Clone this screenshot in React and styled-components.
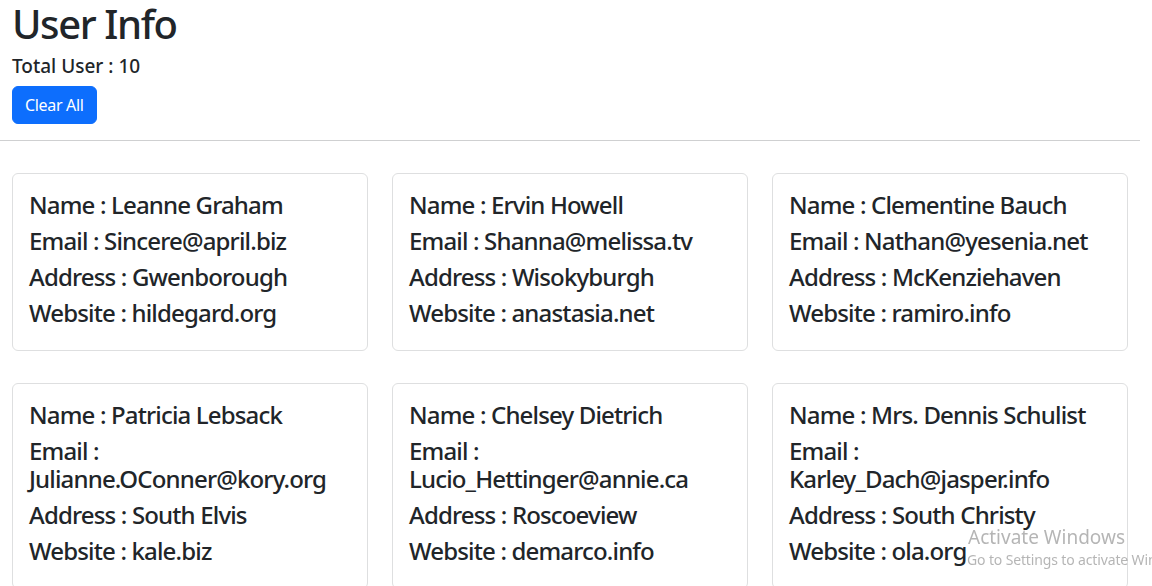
import React from "react";
import styled, { createGlobalStyle } from "styled-components";

const GlobalStyle = createGlobalStyle`
  body {
    margin: 0;
    font-family: "Noto Sans", "Open Sans", sans-serif;
    color: #212529;
    background: #fff;
    overflow: hidden;
  }
`;

const users = [
  { name: "Leanne Graham", email: "Sincere@april.biz", city: "Gwenborough", website: "hildegard.org" },
  { name: "Ervin Howell", email: "Shanna@melissa.tv", city: "Wisokyburgh", website: "anastasia.net" },
  { name: "Clementine Bauch", email: "Nathan@yesenia.net", city: "McKenziehaven", website: "ramiro.info" },
  { name: "Patricia Lebsack", email: "Julianne.OConner@kory.org", city: "South Elvis", website: "kale.biz" },
  { name: "Chelsey Dietrich", email: "Lucio_Hettinger@annie.ca", city: "Roscoeview", website: "demarco.info" },
  { name: "Mrs. Dennis Schulist", email: "Karley_Dach@jasper.info", city: "South Christy", website: "ola.org" },
  { name: "Kurtis Weissnat", email: "Telly.Hoeger@billy.biz", city: "Howemouth", website: "elvis.io" },
  { name: "Nicholas Runolfsdottir V", email: "Sherwood@rosamond.me", city: "Aliyaview", website: "jacynthe.com" },
  { name: "Glenna Reichert", email: "Chaim_McDermott@dana.io", city: "Bartholomebury", website: "conrad.com" },
  { name: "Clementina DuBuque", email: "Rey.Padberg@karina.biz", city: "Lebsackbury", website: "ambrose.net" },
];

const Page = styled.div`
  width: 1140px;
`;

const Top = styled.div`
  padding: 0 12px;
  display: flex;
  flex-direction: column;
  align-items: flex-start;
`;

const Title = styled.h1`
  margin: 0;
  font-size: 40px;
  font-weight: 500;
  line-height: 48px;
  letter-spacing: -0.035em;
`;

const Total = styled.h5`
  margin: 6px 0 8px;
  font-size: 19px;
  font-weight: 500;
  line-height: 24px;
`;

const Button = styled.button`
  font-family: inherit;
  font-size: 16px;
  line-height: 24px;
  padding: 6px 12px;
  color: #fff;
  background-color: #0d6efd;
  border: 1px solid #0d6efd;
  border-radius: 6px;
  cursor: pointer;
  letter-spacing: -0.02em;
`;

const Rule = styled.hr`
  margin: 16px 0 0;
  border: 0;
  border-top: 1px solid #cfd0d1;
`;

const Grid = styled.div`
  display: grid;
  grid-template-columns: repeat(3, 1fr);
  column-gap: 24px;
  row-gap: 32px;
  padding: 32px 12px;
`;

const Card = styled.div`
  border: 1px solid #dedfe0;
  border-radius: 6px;
  padding: 17px 16px 15px;
`;

const Line = styled.h4`
  margin: 0 0 8px;
  font-size: 24px;
  font-weight: 500;
  line-height: 28px;
  letter-spacing: -0.035em;
`;

const Watermark = styled.div`
  position: fixed;
  left: 968px;
  top: 524px;
  color: rgba(120, 120, 120, 0.55);
  white-space: nowrap;
  pointer-events: none;
`;

const WatermarkTitle = styled.div`
  font-size: 19px;
  line-height: 26px;
`;

const WatermarkSub = styled.div`
  font-size: 14px;
  line-height: 20px;
  margin-left: -1px;
  letter-spacing: -0.01em;
`;

export default function App() {
  return (
    <Page>
      <GlobalStyle />
      <Top>
        <Title>User Info</Title>
        <Total>Total User : {users.length}</Total>
        <Button>Clear All</Button>
      </Top>
      <Rule />
      <Grid>
        {users.map((u) => (
          <Card key={u.email}>
            <Line>Name : {u.name}</Line>
            <Line>Email : {u.email}</Line>
            <Line>Address : {u.city}</Line>
            <Line>Website : {u.website}</Line>
          </Card>
        ))}
      </Grid>
      <Watermark>
        <WatermarkTitle>Activate Windows</WatermarkTitle>
        <WatermarkSub>Go to Settings to activate Windows.</WatermarkSub>
      </Watermark>
    </Page>
  );
}
